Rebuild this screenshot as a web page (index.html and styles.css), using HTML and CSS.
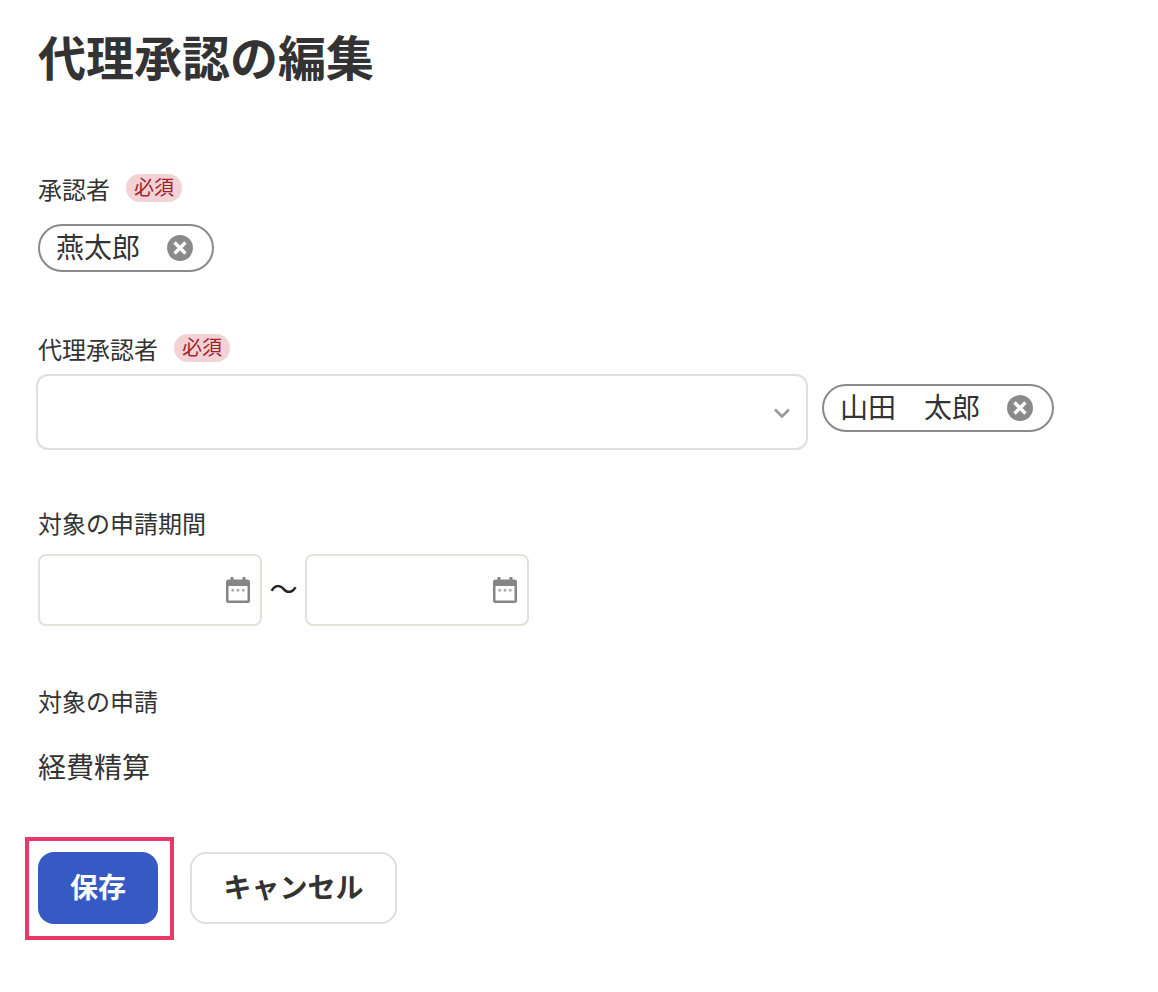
FILE: index.html
```html
<!DOCTYPE html>
<html lang="ja">
<head>
    <meta charset="UTF-8">
    <meta name="viewport" content="width=device-width, initial-scale=1.0">
    <link rel="stylesheet" href="styles.css">
    <title>代理承認の編集</title>
</head>
<body>
    <h1 class="title">代理承認の編集</h1>

    <div class="field approver">
        <div class="label">承認者<span class="required">必須</span></div>
        <div class="chipRow">
            <span class="chip name1">燕太郎
                <svg class="clear" viewBox="0 0 26 26"><circle cx="13" cy="13" r="13" fill="#8a8a8a"/><path d="M7.500 7.500l11 11M18.500 7.500l-11 11" stroke="#fff" stroke-width="3.400"/></svg>
            </span>
        </div>
    </div>

    <div class="field proxy">
        <div class="label">代理承認者<span class="required">必須</span></div>
        <div class="selectRow">
            <div class="select">
                <svg class="chevron" viewBox="0 0 16 10"><path d="M1 1.500L8 8.500l7-7" fill="none" stroke="#999" stroke-width="2.600"/></svg>
            </div>
            <span class="chip name2">山田　太郎
                <svg class="clear" viewBox="0 0 26 26"><circle cx="13" cy="13" r="13" fill="#8a8a8a"/><path d="M7.500 7.500l11 11M18.500 7.500l-11 11" stroke="#fff" stroke-width="3.400"/></svg>
            </span>
        </div>
    </div>

    <div class="field period">
        <div class="label">対象の申請期間</div>
        <div class="dateRow">
            <div class="date">
                <svg class="calendar" viewBox="0 0 24 26"><path d="M4.500 0h3v2.500h9V0h3v2.500h2A2.500 2.500 0 0 1 24 5v18.500a2.500 2.500 0 0 1-2.500 2.500h-19A2.500 2.500 0 0 1 0 23.500V5a2.500 2.500 0 0 1 2.500-2.500h2z" fill="#858585"/><rect x="2.500" y="9" width="19" height="14.500" fill="#fff"/><path d="M5.500 12h2.400v2.400H5.500zM10.800 12h2.400v2.400h-2.400zM16.100 12h2.400v2.400h-2.400z" fill="#a5a5a5"/></svg>
            </div>
            <span class="tilde">〜</span>
            <div class="date">
                <svg class="calendar" viewBox="0 0 24 26"><path d="M4.500 0h3v2.500h9V0h3v2.500h2A2.500 2.500 0 0 1 24 5v18.500a2.500 2.500 0 0 1-2.500 2.500h-19A2.500 2.500 0 0 1 0 23.500V5a2.500 2.500 0 0 1 2.500-2.500h2z" fill="#858585"/><rect x="2.500" y="9" width="19" height="14.500" fill="#fff"/><path d="M5.500 12h2.400v2.400H5.500zM10.800 12h2.400v2.400h-2.400zM16.100 12h2.400v2.400h-2.400z" fill="#a5a5a5"/></svg>
            </div>
        </div>
    </div>

    <div class="field target">
        <div class="label">対象の申請</div>
        <div class="value">経費精算</div>
    </div>

    <div class="actions">
        <button class="btn save">保存</button>
        <button class="btn cancel">キャンセル</button>
    </div>
</body>
</html>
```

FILE: styles.css
```css
body{
    margin: 0;
    padding: 0 0 0 38px;
    background-color: #fff;
    color: #333;
    font-family: "Noto Sans CJK JP", "Noto Sans", sans-serif;
    min-height: 992px;
    box-sizing: border-box;
    overflow: hidden;
}

.title{
    margin: 0;
    padding-top: 20px;
    font-size: 48px;
    line-height: 70px;
    font-weight: 700;
}

.label{
    font-size: 24px;
    line-height: 34px;
    display: flex;
    align-items: center;
}

.required{
    margin-left: 16px;
    margin-top: -2px;
    width: 56px;
    height: 28px;
    border-radius: 14px;
    background: #f3d2d6;
    color: #a3212f;
    font-size: 20px;
    line-height: 26px;
    text-align: center;
}

.approver{ margin-top: 82px; }
.proxy{ margin-top: 60px; }
.period{ margin-top: 56px; }
.target{ margin-top: 58px; }

.chipRow{ margin-top: 18px; display: flex; }

.chip{
    display: inline-flex;
    align-items: center;
    justify-content: space-between;
    box-sizing: border-box;
    height: 48px;
    border: 2px solid #8a8a8a;
    border-radius: 24px;
    padding: 0 19px 4px 16px;
    font-size: 28px;
    white-space: nowrap;
}

.name1{ width: 176px; }
.name2{ width: 232px; margin-left: 14px; margin-top: -8px; }

.clear{ width: 26px; height: 26px; flex: none; margin-top: 4px; }

.selectRow{
    display: flex;
    align-items: center;
    margin-left: -2px;
    margin-top: 8px;
}

.select{
    box-sizing: border-box;
    width: 772px;
    height: 76px;
    border: 2px solid #dedede;
    border-radius: 12px;
    display: flex;
    align-items: center;
    justify-content: flex-end;
    padding-right: 16px;
}

.chevron{ width: 16px; height: 10px; margin-top: 1px; }

.dateRow{
    display: flex;
    align-items: center;
    margin-top: 14px;
}

.date{
    box-sizing: border-box;
    width: 224px;
    height: 72px;
    border: 2px solid #e3e1d9;
    border-radius: 8px;
    display: flex;
    align-items: center;
    justify-content: flex-end;
    padding-right: 10px;
}

.calendar{ width: 24px; height: 26px; }

.tilde{
    width: 43px;
    text-align: center;
    font-size: 28px;
    line-height: 36px;
    padding-bottom: 4px;
    color: #222;
}

.value{
    margin-top: 28px;
    font-size: 28px;
    line-height: 40px;
}

.actions{
    display: flex;
    gap: 32px;
    margin-top: 66px;
}

.btn{
    height: 72px;
    border-radius: 16px;
    font-family: inherit;
    font-size: 28px;
    font-weight: 700;
    padding: 0 0 5px;
    position: relative;
}

.save{
    width: 120px;
    border: none;
    background: #3659c3;
    color: #fff;
}

/* annotation frame */
.save::after{
    content: "";
    position: absolute;
    left: -13px;
    right: -16px;
    top: -15px;
    bottom: -16px;
    border: 4px solid #ea3868;
}

.cancel{
    width: 207px;
    border: 2px solid #dedede;
    background: #fff;
    color: #333;
}
```
